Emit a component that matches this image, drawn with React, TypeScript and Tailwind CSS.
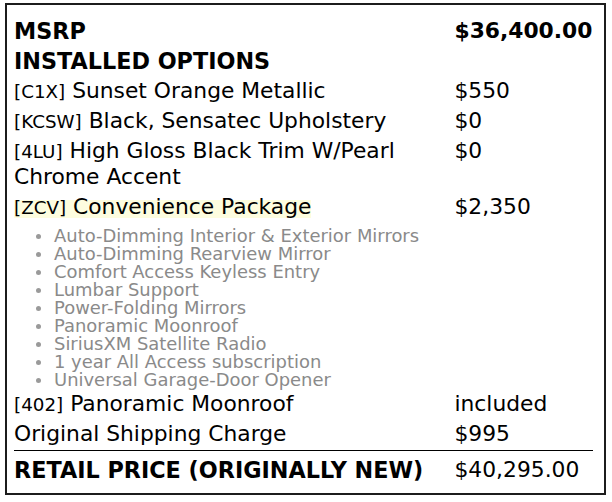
const features = [
  'Auto-Dimming Interior & Exterior Mirrors',
  'Auto-Dimming Rearview Mirror',
  'Comfort Access Keyless Entry',
  'Lumbar Support',
  'Power-Folding Mirrors',
  'Panoramic Moonroof',
  'SiriusXM Satellite Radio',
  '1 year All Access subscription',
  'Universal Garage-Door Opener',
];

type RowProps = {
  code?: string;
  label: string;
  value?: string;
  bold?: boolean;
  boldValue?: boolean;
  highlight?: boolean;
};

const Row = ({ code, label, value, bold, boldValue, highlight }: RowProps) => (
  <div className="flex py-[2px] leading-[26px]">
    <div className={`w-[440.5px] ${bold ? 'font-bold text-[22.3px]' : ''}`}>
      {code ? (
        <span className={`text-[15.5px] leading-none ${highlight ? 'bg-[#fdfddf]' : ''}`}>
          <span className="text-[18.3px] leading-none">[{code}]</span>
          <span className="text-[21.8px] leading-none"> {label}</span>
        </span>
      ) : (
        label
      )}
    </div>
    <div className={`flex-1 ${boldValue ? 'font-bold' : ''}`}>{value}</div>
  </div>
);

const App = () => {
  return (
    <div className="pt-[3px] pl-[5px] bg-white min-h-[502px] font-['DejaVu_Sans',sans-serif] text-black">
      <div className="w-[601px] border-2 border-[#1c1c1c] pt-[10.5px] pb-[8.5px] pl-[7px] pr-[11px] text-[21.8px]">
        <Row label="MSRP" value="$36,400.00" bold boldValue />
        <Row label="INSTALLED OPTIONS" bold />
        <Row code="C1X" label="Sunset Orange Metallic" value="$550" />
        <Row code="KCSW" label="Black, Sensatec Upholstery" value="$0" />
        <Row code="4LU" label="High Gloss Black Trim W/Pearl Chrome Accent" value="$0" />
        <Row code="ZCV" label="Convenience Package" value="$2,350" highlight />

        {/* package contents */}
        <ul className="pt-[5.3px]">
          {features.map((f) => (
            <li key={f} className="flex items-center h-[18px] leading-[18px] text-[17.95px] text-[#8a8a8a]">
              <span className="ml-[22px] mr-[13px] mt-[2px] w-[5px] h-[5px] rounded-full bg-[#9a9a9a]" />
              {f}
            </li>
          ))}
        </ul>

        <Row code="402" label="Panoramic Moonroof" value="included" />
        <Row label="Original Shipping Charge" value="$995" />

        <div className="mt-[1px] border-t border-black pt-[4px]">
          <Row label="RETAIL PRICE (ORIGINALLY NEW)" value="$40,295.00" bold />
        </div>
      </div>
    </div>
  );
};

export default App;
